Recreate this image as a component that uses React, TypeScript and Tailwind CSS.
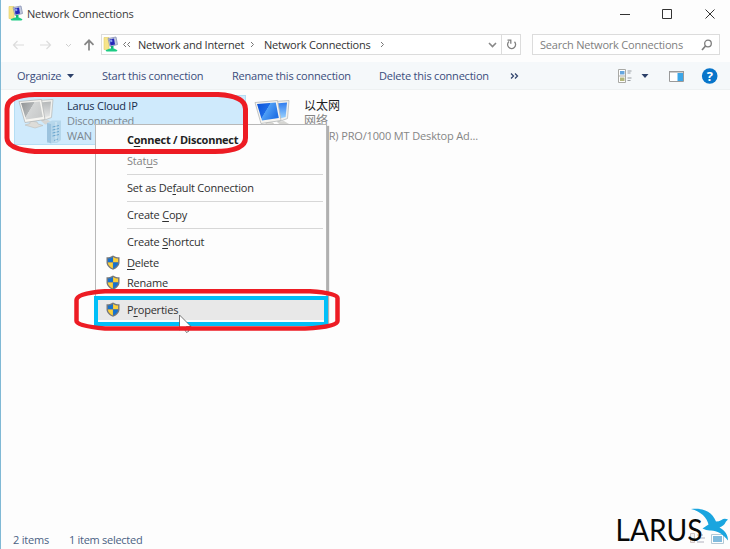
import React from "react";

function NetIcon() {
  return (
    <svg width="16" height="17" viewBox="0 0 16 17" className="shrink-0">
      <path d="M1 1.500h5v12H1z" fill="#f6e48a" stroke="#e3cd62" strokeWidth=".6" />
      <path d="M5 2.500L13 1l1.500 7.500L7 10.500z" fill="#c3cbe0" stroke="#8b94b5" strokeWidth=".8" />
      <path d="M6.500 3.500L11 2.500l1 6-4.500 1z" fill="#2427b8" />
      <path d="M7 4l2-.5.5 2-2 1z" fill="#8ea6f0" />
      <path d="M8 10h2.500v3H8z" fill="#12b678" />
      <path d="M2.500 14.200l4.500-1.700h4l3.500 1.700-1 1.300H3.500z" fill="#1dcb84" />
    </svg>
  );
}

function Shield() {
  return (
    <svg width="14" height="15" viewBox="0 0 14 15">
      <path d="M7 .4C5 1.800 3 2.200.5 2.200v5.200C.5 11 4 13.500 7 14.700c3-1.200 6.500-3.700 6.500-7.300V2.200C11 2.200 9 1.800 7 .4z" fill="#77797c" />
      <path d="M6.900 1.900C5.200 3 3.600 3.400 1.900 3.500V7.300h5z" fill="#1672cf" />
      <path d="M7.100 1.900C8.800 3 10.400 3.400 12.100 3.500V7.300h-5z" fill="#fbd03b" />
      <path d="M1.900 7.500h5v5.900C4.300 12.300 1.900 10.400 1.900 7.500z" fill="#fbd03b" />
      <path d="M12.100 7.500h-5v5.900C9.700 12.300 12.100 10.400 12.100 7.500z" fill="#1672cf" />
    </svg>
  );
}

function Monitors({ off = false }: { off?: boolean }) {
  const a = off ? "#8f9294" : "#0b50d8";
  const b = off ? "#d4d6d6" : "#4f9ff5";
  const id = off ? "off" : "on";
  return (
    <svg width="46" height="48" viewBox="0 0 46 48">
      <defs>
        <linearGradient id={id} x1="0" y1="0" x2="1" y2=".5">
          <stop offset="0" stopColor={a} />
          <stop offset=".5" stopColor={off ? "#b0b3b4" : "#1d6be6"} />
          <stop offset=".52" stopColor={b} />
          <stop offset="1" stopColor={off ? "#c9cbcb" : "#2273e6"} />
        </linearGradient>
        <linearGradient id={id + "2"} x1="0" y1="0" x2="0" y2="1">
          <stop offset="0" stopColor={off ? "#b5b8b9" : "#2f7cee"} />
          <stop offset="1" stopColor={off ? "#e6e7e7" : "#9fd6ff"} />
        </linearGradient>
      </defs>
      <path d="M20 3.500L35 2.500l-1.500 18L24 24z" fill="#f1f1ee" stroke="#b9bcbc" strokeWidth=".8" />
      <path d="M22 5.500L33 4.500l-1.300 14.500-8 2z" fill={`url(#${id}2)`} />
      <path d="M23 24l7-1 5 3-8 1.500z" fill="#d6d6d3" />
      <path d="M12 24l7 1 1 2 5 1.500-8 2.500-10-3 5-1.500z" fill="#dddcd8" stroke="#bdbdb9" strokeWidth=".6" />
      <path d="M1 4.500L23.500 2.500 27 22.500 7 25.500z" fill="#f6f5f1" stroke="#b5b8b8" strokeWidth=".8" />
      <path d="M3 6L21.800 4.400l3 15.600L8 22.500z" fill={`url(#${id})`} />
      {off && (
        <g>
          <path d="M29 26l5-2.500h9V43l-4 3H29z" fill="#b7d8ec" />
          <path d="M29 26l4 1v19.500l-4-2z" fill="#9cc3de" />
          <path d="M33 27l9.500-2.500V43L33 46.500z" fill="#b4d5ea" />
          <path d="M34.500 30l6.500-1.500M34.500 33l6.500-1.500M34.500 36l6.500-1.500M34.500 39l6.500-1.500M36 43.500l4-1.500" stroke="#6ba6ce" strokeWidth="1" />
          <path d="M38 25v20" stroke="#e3f2fa" strokeWidth=".8" />
        </g>
      )}
    </svg>
  );
}

function Sep() {
  return <div className="ml-[31px] mr-[3px] h-px shrink-0 bg-[#d7d7d7]" />;
}

function Item({ children, h, shield, cls = "" }: { children: React.ReactNode; h: string; shield?: boolean; cls?: string }) {
  return (
    <div className={`flex shrink-0 items-center ${h} ${cls}`}>
      <span className="flex w-[31px] shrink-0 pl-[10px]">{shield && <Shield />}</span>
      <span className="whitespace-nowrap">{children}</span>
    </div>
  );
}

const U = ({ children }: { children: string }) => <span className="underline underline-offset-2">{children}</span>;

export default function App() {
  return (
    <div className="relative flex h-[549px] w-[730px] flex-col overflow-hidden border-l border-[#80b9d5] bg-[#fdfdfd] font-['Open_Sans','Noto_Sans_CJK_SC',sans-serif] text-[11px] leading-[15px] tracking-[-0.21px] text-[#333]">
      <header className="flex h-[27px] shrink-0 items-center pl-[7px]">
        <NetIcon />
        <span className="ml-[3px] flex-1 whitespace-nowrap pb-px text-[#3b3b3b]">Network Connections</span>
        <svg width="120" height="26" viewBox="0 0 120 26" fill="none" stroke="#333" strokeWidth="1">
          <path d="M10 13.500h10M52.500 8.500h9v9h-9zM95.500 8.500l9 9M104.500 8.500l-9 9" />
        </svg>
      </header>

      <div className="flex h-[35px] shrink-0 items-center">
        <svg width="100" height="20" viewBox="0 0 100 20" fill="none" className="shrink-0">
          <path d="M12 10h11M16.500 6L12.500 10l4 4M39 10h11M45.500 6l4 4-4 4" stroke="#dcdcdc" strokeWidth="1.200" />
          <path d="M65 9l2.500 2.500L70 9" stroke="#cfcfcf" />
          <path d="M88 15.500V5.500M83.500 9.800L88 5.300l4.500 4.500" stroke="#858585" strokeWidth="1.700" />
        </svg>
        <div className="flex h-[21px] w-[420px] shrink-0 items-center border border-[#dcdcdc] bg-white pl-px">
          <NetIcon />
          <svg width="9" height="9" viewBox="0 0 9 9" fill="none" stroke="#777" className="ml-[3px]"><path d="M4 2L1.500 4.500 4 7M8 2L5.500 4.500 8 7" /></svg>
          <span className="ml-[7px] w-[112px] whitespace-nowrap">Network and Internet</span>
          <svg width="5" height="9" viewBox="0 0 5 9" fill="none" stroke="#777"><path d="M1 2l2.500 2.500L1 7" /></svg>
          <span className="ml-[9px] w-[116px] whitespace-nowrap">Network Connections</span>
          <svg width="5" height="9" viewBox="0 0 5 9" fill="none" stroke="#777"><path d="M1 2l2.500 2.500L1 7" /></svg>
          <span className="flex-1" />
          <svg width="36" height="19" viewBox="0 0 36 19" fill="none">
            <path d="M5 8l3.500 3.500L12 8" stroke="#888" strokeWidth="1.600" />
            <path d="M17.500 0v19" stroke="#dcdcdc" />
            <path d="M30.500 6.800A4 4 0 1 1 25 6.500M23.500 5.200h3.300v3.600" stroke="#808080" strokeWidth="1.300" />
          </svg>
        </div>
        <div className="ml-[11px] flex h-[21px] w-[188px] shrink-0 items-center border border-[#dcdcdc] bg-white pl-[7px] text-[#808080]">
          <span className="w-[160px] whitespace-nowrap tracking-[-0.2px]">Search Network Connections</span>
          <svg width="14" height="14" viewBox="0 0 14 14" fill="none" stroke="#7c7c7c" strokeWidth="1.300"><circle cx="8" cy="5.500" r="3.300" /><path d="M5.500 8L2 12" strokeWidth="1.600" /></svg>
        </div>
      </div>

      <div className="flex h-[28px] shrink-0 items-center whitespace-nowrap border-b border-[#eef1f2] bg-[#f5f8fa] pl-4 text-[#3a4d7c]">
        <span className="w-[50px]">Organize</span>
        <svg width="7" height="4" viewBox="0 0 7 4"><path d="M0 0h7L3.500 4z" fill="#2c4069" /></svg>
        <span className="ml-7 w-[130px]">Start this connection</span>
        <span className="w-[147px]">Rename this connection</span>
        <span className="w-[131px]">Delete this connection</span>
        <svg width="9" height="8" viewBox="0 0 9 8" fill="none" stroke="#34476e" strokeWidth="1.300"><path d="M1 1.500L3.500 4 1 6.500M5 1.500L7.500 4 5 6.500" /></svg>
        <span className="flex-1" />
        <svg width="120" height="20" viewBox="0 0 120 20">
          <path d="M8.500 3.500h7v13h-7zM8.500 10h7" fill="#fff" stroke="#a9a9a5" />
          <path d="M10 5h4.500v3.500H10z" fill="#66a6df" />
          <path d="M10 11.500h4.500V15H10z" fill="#b3b67b" />
          <path d="M17.500 5h4M17.500 7h3M17.500 12h4M17.500 14.500h3" stroke="#989da2" />
          <path d="M31.500 8h7l-3.500 4z" fill="#2c4069" />
          <path d="M59.500 5.500h14v10h-14z" fill="#fff" stroke="#9a9a9a" />
          <path d="M59 5h15v1.500H59z" fill="#9a9a9a" />
          <path d="M67.500 7h5.500v8h-5.500z" fill="#3ba6e8" />
          <circle cx="99.700" cy="10" r="7.800" fill="#0875ca" />
          <text x="99.700" y="14.500" fill="#fff" fontSize="13" fontWeight="700" textAnchor="middle">?</text>
        </svg>
      </div>

      <main className="flex flex-1 items-start pl-[13px] pt-[5px]">
        <div className="flex h-[50px] w-[232px] border border-[#b5def4] bg-[#cfeafc]">
          <div className="w-[52px] pl-[3px] pt-px"><Monitors off /></div>
          <div className="pt-[2px] text-[#7b8790]">
            <div className="text-[#182d4c]">Larus Cloud IP</div>
            <div>Disconnected</div>
            <div>WAN</div>
          </div>
        </div>
        <div className="flex pl-[8px] pt-[3px]">
          <div className="w-[50px]"><Monitors /></div>
          <div className="text-[#858585]">
            <div className="text-[12px] tracking-normal text-[#222]">以太网</div>
            <div className="text-[12px] tracking-normal">网络</div>
            <div className="w-[180px] whitespace-nowrap pl-[19px] tracking-[-0.15px]">l(R) PRO/1000 MT Desktop Ad...</div>
          </div>
        </div>
      </main>

      <footer className="flex h-[19px] shrink-0 items-center pl-3 text-[#4a6184]">
        <span className="w-[56px]">2 items</span>
        <span className="tracking-[-0.28px]">1 item selected</span>
      </footer>

      <div className="absolute left-[94px] top-[124px] flex h-[199px] w-[232px] flex-col border border-[#b8b8b8] bg-[#fdfdfd] pt-[4px] text-[#303030] shadow-[2px_2px_1px_#b0b0b0]">
        <Item h="h-[21px]" cls="font-bold text-[#222] tracking-[-0.25px]">C<U>o</U>nnect / Disconnect</Item>
        <Item h="h-[21px]" cls="text-[#858585]">Stat<U>u</U>s</Item>
        <div className="h-[3px] shrink-0" />
        <Sep />
        <Item h="h-[26px]" cls="pb-px">Set as De<U>f</U>ault Connection</Item>
        <Sep />
        <Item h="h-[26px]" cls="pb-px">Create <U>C</U>opy</Item>
        <Sep />
        <Item h="h-[23px]" cls="pt-[2px]">Create <U>S</U>hortcut</Item>
        <Item h="h-[20px]" shield><U>D</U>elete</Item>
        <Item h="h-[21px]" shield>Rena<U>m</U>e</Item>
        <div className="h-[6px] shrink-0" />
        <Item h="h-[21px]" shield cls="bg-[#e8e8e8]">P<U>r</U>operties</Item>
      </div>

      <svg width="730" height="549" viewBox="0 0 730 549" fill="none" className="absolute -left-px top-0">
        <path d="M96 298h230v26H96z" stroke="#00bff8" strokeWidth="4" />
        <path d="M179.500 315v15l3.500-3 3.500 5.500 2.500-1.500-2.500-4.500h4.500z" fill="#fff" stroke="#555" strokeWidth=".8" />
        <path d="M35 94.500H218Q245.500 96 245.500 109V138Q245.500 151 215 151.500H35Q7 149 7 138V109Q7 95 35 94.500z" stroke="#ed1c24" strokeWidth="5" />
        <path d="M105 291.200H310Q337.500 293 337.500 298V321Q337.500 327 305 328.500H105Q76.500 326 76.500 321V300Q76.500 293 105 291.200z" stroke="#ed1c24" strokeWidth="4.500" />
      </svg>

      <svg width="120" height="50" viewBox="0 0 120 50" className="absolute left-[609px] top-[499px]">
        <g opacity=".75">
          <path d="M80.500 34.500h4v9h-4z" fill="#eee" stroke="#c2b2b2" />
          <path d="M87 36h6M87 39h8M87 43h7" stroke="#99a" />
          <path d="M101.500 35.500h12v9h-12z" fill="#fff" stroke="#9db8c8" />
          <path d="M103 37h9v6h-9z" fill="#57a6d4" />
        </g>
        <text x="5.500" y="42" fontFamily="Lato" fontSize="30" letterSpacing="0" fill="#080808" textLength="87" lengthAdjust="spacingAndGlyphs">LARUS</text>
        <path d="M81 10C92 8.500 102 12 106 22.500Q109 22.500 111.500 21Q114 19 118 20.500L116 22.500Q114 27 109.500 28.500C115 31.500 118 36 118 41.500C113 35 107 31.500 101 31.500Q97 32 92.500 29.500L98.500 25.500C97 18.500 91 12.500 81 10z" fill="#1aa5df" />
      </svg>
    </div>
  );
}
